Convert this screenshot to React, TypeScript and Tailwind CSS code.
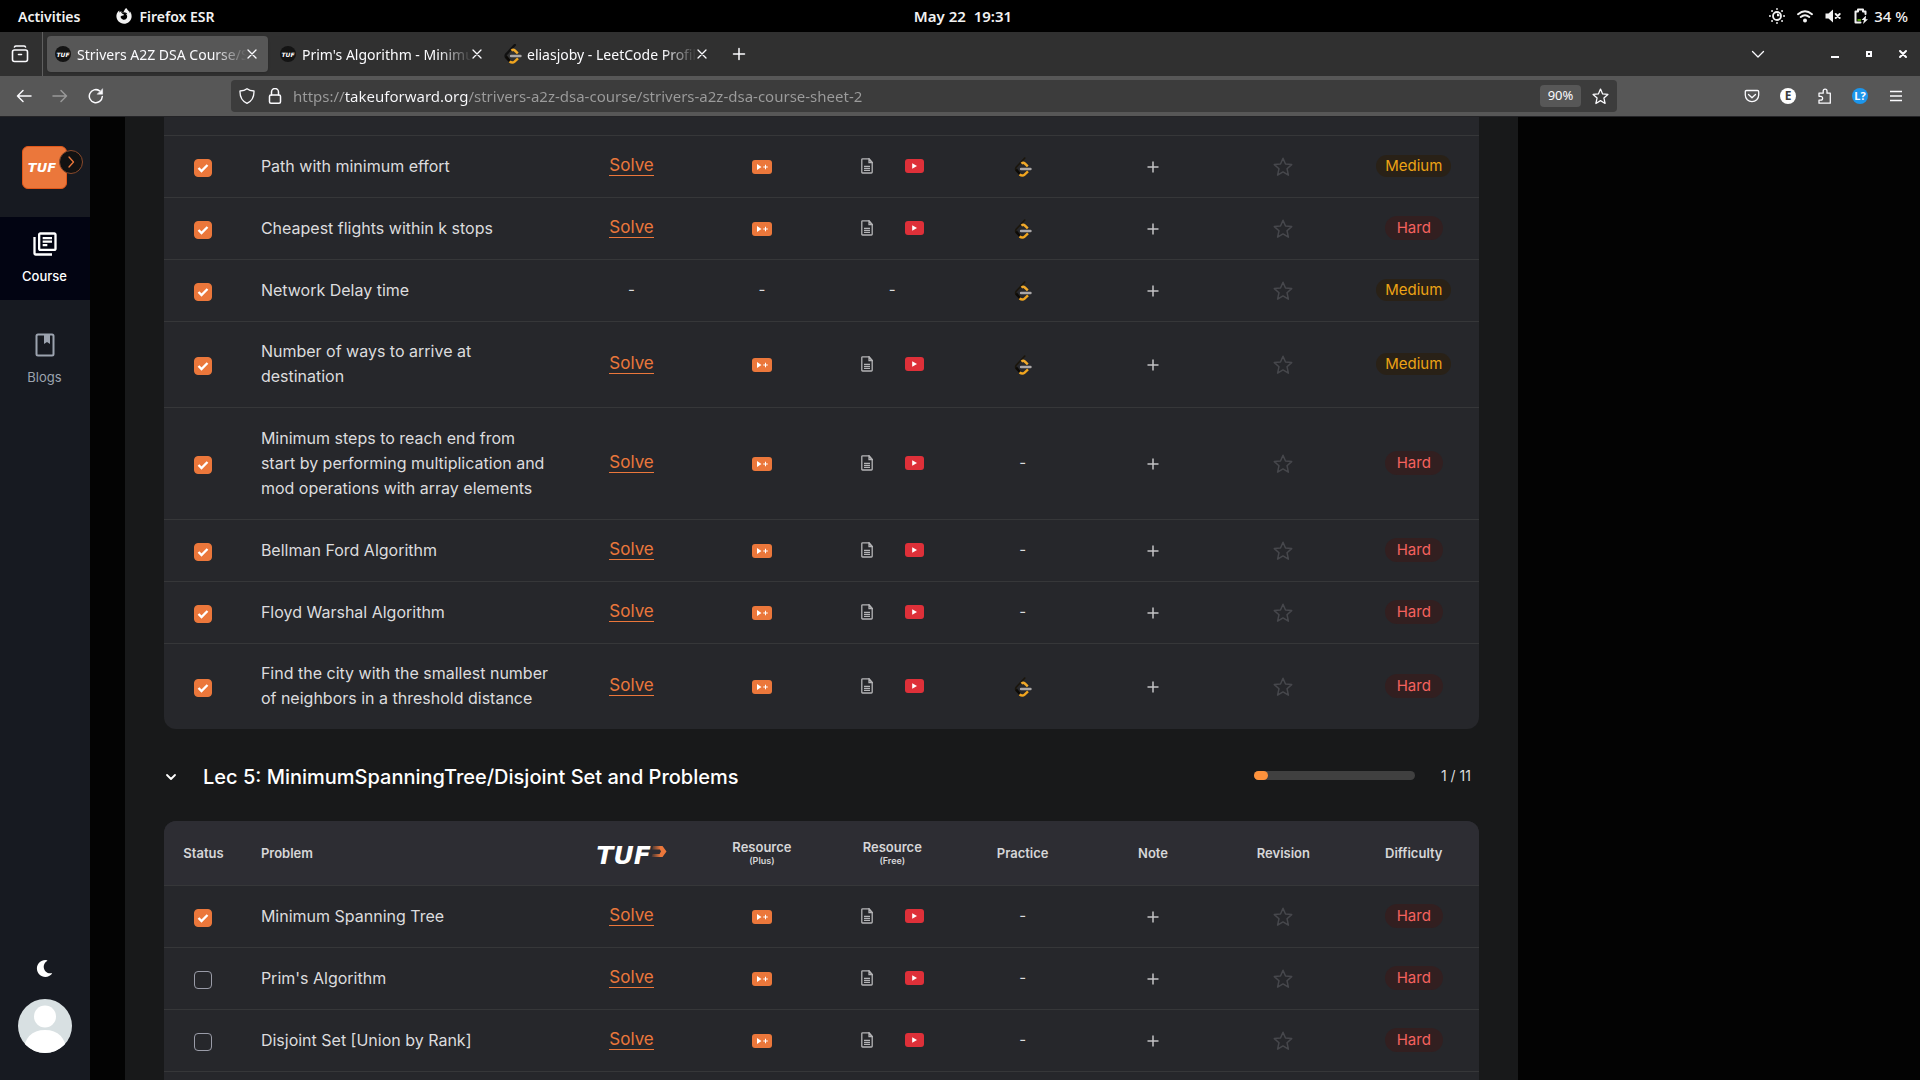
import { useState } from "react";
import type { ReactNode } from "react";
import { FaMoon, FaFirefoxBrowser } from "react-icons/fa";
import { MdOutlineLibraryBooks } from "react-icons/md";

type Problem = {
  name: string;
  lines: 1 | 2 | 3;
  done: boolean;
  resources: boolean;
  practice: boolean;
  level: "Medium" | "Hard";
};

const p = (
  name: string,
  lines: 1 | 2 | 3,
  level: "Medium" | "Hard",
  practice: boolean,
  done = true,
  resources = true,
): Problem => ({ name, lines, level, practice, done, resources });

const shortestPath: Problem[] = [
  p("Path with minimum effort", 1, "Medium", true),
  p("Cheapest flights within k stops", 1, "Hard", true),
  p("Network Delay time", 1, "Medium", true, true, false),
  p("Number of ways to arrive at destination", 2, "Medium", true),
  p("Minimum steps to reach end from start by performing multiplication and mod operations with array elements", 3, "Hard", false),
  p("Bellman Ford Algorithm", 1, "Hard", false),
  p("Floyd Warshal Algorithm", 1, "Hard", false),
  p("Find the city with the smallest number of neighbors in a threshold distance", 2, "Hard", true),
];

const spanningTree: Problem[] = [
  p("Minimum Spanning Tree", 1, "Hard", false),
  p("Prim's Algorithm", 1, "Hard", false, false),
  p("Disjoint Set [Union by Rank]", 1, "Hard", false, false),
  p("Disjoint Set [Union by Size]", 1, "Hard", false, false),
];

const rowHeight = { 1: "h-[62px]", 2: "h-[86px]", 3: "h-[112px]" };

/* ---------- icons ---------- */

function Svg({ size = 16, box = "0 0 16 16", className = "", children }: { size?: number; box?: string; className?: string; children: ReactNode }) {
  return (
    <svg width={size} height={size} viewBox={box} fill="none" stroke="currentColor" strokeWidth="1.3" strokeLinecap="round" strokeLinejoin="round" className={`shrink-0 ${className}`} aria-hidden="true">
      {children}
    </svg>
  );
}

const CloseIcon = () => (
  <Svg size={10} box="0 0 10 10"><path d="M1 1l8 8M9 1l-8 8" /></Svg>
);

function LeetCodeIcon({ dark = false }: { dark?: boolean }) {
  return (
    <svg width="18" height="20" viewBox="0 0 18 20" fill="none" strokeLinejoin="round" className="shrink-0" aria-hidden="true">
      <path d="M10.800 1L2.200 10.200Q1 12 2.200 13.600L5.500 17" stroke={dark ? "#111" : "#1b160c"} strokeWidth={dark ? 2.4 : 1.6} strokeLinecap="round" />
      <path d="M2.200 12.500L5.500 16.500" stroke="#0c0a06" strokeWidth="2.200" />
      <path d="M7.500 6.600Q9.200 5 10.800 6.500L13.800 9.300" stroke="#f0a92a" strokeWidth="2.400" />
      <path d="M5.500 17.500Q8.500 19.600 10.600 17.600L14 14.400" stroke="#f0a51f" strokeWidth="2.400" />
      <path d="M7 12H16.500" stroke="#aaa7a8" strokeWidth="2.400" strokeLinecap="round" />
    </svg>
  );
}

const PlusVideoIcon = () => (
  <svg width="20" height="14" viewBox="0 0 20 14" aria-hidden="true">
    <rect width="20" height="14" rx="3" fill="#eb773b" />
    <path d="M5 4l4.500 3L5 10zM13 4.800h1V6.500h1.800v1H14v1.800h-1V7.500h-1.800v-1H13z" fill="#fff" />
  </svg>
);

const YouTubeIcon = () => (
  <svg width="19" height="14" viewBox="0 0 19 14" aria-hidden="true">
    <rect width="19" height="14" rx="3" fill="#de3039" />
    <path d="M7.200 4.200l4.800 2.800-4.800 2.800z" fill="#fff" />
  </svg>
);

const ArticleIcon = () => (
  <svg width="12" height="16" viewBox="0 0 12 16" fill="none" stroke="#b4b4b6" strokeWidth="1.300" aria-hidden="true">
    <path d="M.800 1.600q0-.8.8-.8H8l3.200 3.600v9.800q0 .8-.8.8H1.600q-.8 0-.8-.8z" />
    <path d="M8 .8v3.700h3.200zM3 8.400h6M3 10.400h6M3 12.400h6" />
  </svg>
);

const StarIcon = ({ size }: { size: number }) => (
  <svg width={size} height={size} viewBox="0 0 20 20" fill="none" stroke="currentColor" strokeWidth="1.500" strokeLinejoin="round" aria-hidden="true">
    <path d="M10 1.300l2.500 5.700 6.200.6-4.700 4.100 1.400 6.500-5.400-3.300-5.400 3.300L6 11.700 1.300 7.600l6.200-.6z" />
  </svg>
);

function TufFavicon() {
  return (
    <span className="flex size-4 shrink-0 items-center justify-center rounded-full bg-[#141414] font-['DejaVu_Sans',sans-serif] text-[6px] font-bold italic text-white" aria-hidden="true">
      TUF
    </span>
  );
}

/* ---------- desktop and browser bars ---------- */

function TopBar() {
  return (
    <header className="grid h-8 shrink-0 grid-cols-3 items-center bg-black pl-[18px] pr-3 text-[14px] font-semibold text-[#f2f2f2]">
      <div className="flex items-center">
        <button>Activities</button>
        <button className="ml-[36px] flex items-center gap-[7px]">
          <FaFirefoxBrowser size={16} />
          Firefox ESR
        </button>
      </div>
      <button className="justify-self-center whitespace-pre text-[15px]">May 22  19:31</button>
      <div className="flex items-center justify-end gap-3">
        <Svg>
          <circle cx="8" cy="8" r="4" strokeWidth="1.800" />
          <path d="M8 5.500v2.700h2.500A2.500 2.500 0 0 0 8 5.500z" fill="currentColor" stroke="none" />
          <path d="M8 .9v.1M8 15v.1M.9 8H1M15 8h.1M3 3h.1M13 3h.1M3 13h.1M13 13h.1" strokeWidth="1.800" />
        </Svg>
        <Svg>
          <path d="M1 6.200q7-6 14 0M3.700 9q4.300-3.700 8.600 0" strokeWidth="1.900" />
          <circle cx="8" cy="12.500" r="2" fill="currentColor" stroke="none" />
        </Svg>
        <Svg>
          <path d="M.500 5.500H3.500L8 1.500v13L3.500 10.500h-3z" fill="currentColor" stroke="none" />
          <path d="M10.700 6l4 4M14.700 6l-4 4" strokeWidth="1.900" />
        </Svg>
        <div className="flex items-center gap-[5px]">
          <Svg>
            <path d="M12.500 6V3.500H10V1.500H5v2H2.500v11h5" strokeWidth="2" />
            <path d="M4.500 11h3.500v2H4.500z" fill="#4e9a06" stroke="none" />
            <path d="M13 7.500L8.500 12H11l-1 4 5-4.800h-2.300z" fill="currentColor" stroke="none" />
          </Svg>
          <span className="text-[15px] font-medium">34 %</span>
        </div>
      </div>
    </header>
  );
}

function Tab({ title, icon, active = false }: { title: string; icon: ReactNode; active?: boolean }) {
  return (
    <div className={`flex h-9 w-[221px] shrink-0 items-center rounded pl-2 pr-[11px] ${active ? "bg-[#575757] shadow" : ""}`}>
      <button role="tab" aria-selected={active} className="flex min-w-0 flex-1 items-center gap-[6px] text-left">
        <span className="flex w-4 shrink-0 justify-center">{icon}</span>
        <span className="flex-1 overflow-hidden whitespace-nowrap mask-r-from-80%">{title}</span>
      </button>
      <button aria-label="Close tab"><CloseIcon /></button>
    </div>
  );
}

function TabBar() {
  return (
    <div className="flex h-11 shrink-0 items-center bg-[#303030] pr-3 text-[14px] text-[#fbfbfe]">
      <button className="flex h-full w-[43px] items-center justify-center border-r border-[#5f5f5f] pr-[3px]" aria-label="Recent browsing">
        <Svg size={18} box="0 0 18 18">
          <rect x="1.500" y="5" width="15" height="11.500" rx="2" strokeWidth="1.600" />
          <path d="M3.500 2q.5-1 1.500-1h8q1 0 1.500 1M7.500 9.500h3" strokeWidth="1.600" />
        </Svg>
      </button>
      <div role="tablist" className="ml-1 flex gap-1">
        <Tab active title="Strivers A2Z DSA Course/Sheet" icon={<TufFavicon />} />
        <Tab title="Prim's Algorithm - Minimum" icon={<TufFavicon />} />
        <Tab title="eliasjoby - LeetCode Profile" icon={<LeetCodeIcon dark />} />
      </div>
      <button className="ml-[14px]" aria-label="New tab">
        <Svg size={14} box="0 0 14 14"><path d="M7 1.500v11M1.500 7h11" strokeWidth="1.500" /></Svg>
      </button>
      <div className="ml-auto flex items-center">
        <button className="mr-[65px]" aria-label="List all tabs">
          <Svg size={14} box="0 0 14 14"><path d="M1.500 4.500L7 10l5.500-5.500" /></Svg>
        </button>
        <div className="flex gap-6">
          <button aria-label="Minimize"><Svg size={10} box="0 0 10 10"><path d="M1 8h8" strokeWidth="2" strokeLinecap="butt" /></Svg></button>
          <button aria-label="Maximize"><Svg size={10} box="0 0 10 10"><rect x="3" y="3" width="4" height="4" strokeWidth="2" strokeLinejoin="miter" /></Svg></button>
          <button aria-label="Close"><Svg size={10} box="0 0 10 10"><path d="M2 2l6 6M8 2l-6 6" strokeWidth="2" /></Svg></button>
        </div>
      </div>
    </div>
  );
}

function ToolBar() {
  return (
    <nav className="flex h-[41px] shrink-0 items-center border-b border-[#242427] bg-[#575757] pl-4 pr-4 text-[#fbfbfe]">
      <div className="flex w-[215px] items-center gap-5">
        <button aria-label="Back"><Svg><path d="M15 8H1.500M7 2.500L1.500 8 7 13.500" strokeWidth="1.500" /></Svg></button>
        <button aria-label="Forward" className="text-[#999]"><Svg><path d="M1 8h13.500M9 2.500l5.500 5.500L9 13.500" strokeWidth="1.500" /></Svg></button>
        <button aria-label="Reload">
          <Svg>
            <path d="M14.300 8.500A6.500 6.500 0 1 1 11.500 2.800" strokeWidth="1.500" />
            <path d="M14.600 1v5.200H9.400z" fill="currentColor" strokeWidth=".5" />
          </Svg>
        </button>
      </div>
      <div className="flex h-8 min-w-0 flex-1 items-center rounded bg-[#3c3c3c] pl-2 pr-2">
        <Svg><path d="M8 .8Q10.500 3 15 3q.3 9-7 12.300Q.7 12 1 3 5.500 3 8 .8z" /></Svg>
        <Svg className="ml-3"><rect x="2.500" y="7" width="11" height="8.200" rx="1.500" strokeWidth="1.500" /><path d="M4.500 7V4a3.500 3.500 0 0 1 7 0v3" strokeWidth="1.500" /></Svg>
        <input
          aria-label="Address"
          readOnly
          value="https://takeuforward.org/strivers-a2z-dsa-course/strivers-a2z-dsa-course-sheet-2"
          className="ml-[10px] min-w-0 flex-1 bg-[linear-gradient(to_right,#9c9c9c_51px,#fbfbfe_51px,#fbfbfe_175px,#9c9c9c_175px)] bg-clip-text text-[15px] text-transparent outline-none"
        />
        <button className="mr-[11px] flex h-[22px] w-[41px] items-center justify-center rounded-sm bg-[#575757] text-[13px]">90%</button>
        <button aria-label="Bookmark"><StarIcon size={17} /></button>
      </div>
      <div className="ml-[127px] flex items-center gap-5">
        <button aria-label="Pocket"><Svg><path d="M2.500 2.500h11q1.200 0 1.200 1.200V7a6.700 6.700 0 0 1-13.400 0V3.700q0-1.200 1.200-1.200zM4.500 6.500L8 9.800l3.500-3.300" /></Svg></button>
        <button aria-label="Account" className="flex size-4 items-center justify-center rounded-full bg-white text-[12px] font-bold text-[#3c3c3c]">E</button>
        <button aria-label="Extensions"><Svg><path d="M3 15.200h11.300V5.200H11V3a1.900 1.900 0 0 0-3.800 0v2.200H3v3.100h1.700a1.900 1.900 0 0 1 0 3.800H3z" /></Svg></button>
        <button aria-label="Language extension" className="flex size-4 items-center justify-center rounded-full bg-[#1c96ec] text-[11px] font-bold">L?</button>
        <button aria-label="Menu"><Svg><path d="M2 3.500h12M2 8h12M2 12.500h12" strokeLinecap="butt" /></Svg></button>
      </div>
    </nav>
  );
}

/* ---------- page ---------- */

function SideBar() {
  return (
    <aside className="flex w-[90px] shrink-0 flex-col items-center bg-[#171a21] pb-[27px] pt-[29px] text-[13px]">
      <div className="relative mr-[2px] flex h-[43px] w-[45px] items-center justify-center rounded-md border border-[#e0581b] bg-[#eb773b]">
        <span className="-ml-1 font-['DejaVu_Sans',sans-serif] text-[13px] font-bold italic text-white">TUF</span>
        <button aria-label="Expand menu" className="absolute -right-[17px] top-[3px] flex size-6 items-center justify-center rounded-full border border-[#8a4a2c] bg-[#121212] text-[#eb773b]">
          <Svg size={12} box="0 0 12 12"><path d="M4 1l4.500 5L4 11" /></Svg>
        </button>
      </div>
      <nav className="mt-7 flex w-full flex-col gap-[18px]">
        <a href="#course" className="flex h-[83px] flex-col items-center justify-center gap-[9px] bg-[#020412] pr-px font-medium text-white">
          <MdOutlineLibraryBooks size={28} />
          Course
        </a>
        <a href="#blogs" className="flex h-[83px] flex-col items-center justify-center gap-[9px] pr-px text-[#9ca3af]">
          <Svg size={28} box="0 0 28 28">
            <rect x="5.500" y="3.500" width="17" height="21" rx="1.500" strokeWidth="2" />
            <path d="M13 4h6v9l-3-2-3 2z" fill="currentColor" stroke="none" />
          </Svg>
          Blogs
        </a>
      </nav>
      <button className="mr-[2px] mt-auto text-white" aria-label="Dark mode"><FaMoon size={17} /></button>
      <button className="mt-[22px] size-[54px] overflow-hidden rounded-full" aria-label="Profile">
        <svg viewBox="0 0 54 54" aria-hidden="true">
          <rect width="54" height="54" fill="#d8e0e2" />
          <circle cx="27" cy="17.500" r="11" fill="#fff" />
          <path d="M5 54Q7 31 27 31t22 23z" fill="#fff" />
        </svg>
      </button>
    </aside>
  );
}

function ProblemRow({ problem }: { problem: Problem }) {
  const [done, setDone] = useState(problem.done);
  const dash = <span>-</span>;
  return (
    <tr className={`border-b border-[#363739] text-center last:border-b-0 ${rowHeight[problem.lines]}`}>
      <td className="pt-1">
        <span className="flex justify-center">
          <span className="relative flex">
            <input
              type="checkbox"
              aria-label={`${problem.name} done`}
              checked={done}
              onChange={() => setDone(!done)}
              className="size-[18px] appearance-none rounded border border-[#9a9ca8] checked:border-[#eb773b] checked:bg-[#eb773b]"
            />
            {done && (
              <Svg size={18} box="0 0 18 18" className="pointer-events-none absolute inset-0 text-white"><path d="M4.500 9l3 3L13.500 6" strokeWidth="2.400" strokeLinecap="butt" strokeLinejoin="miter" /></Svg>
            )}
          </span>
        </span>
      </td>
      <td className="pl-[18px] pr-[15px] text-left text-[16px] leading-[25px]">{problem.name}</td>
      <td>{problem.resources ? <a href="#solve" className="border-b border-[#eb773b] text-[17px] leading-5 text-[#eb773b]">Solve</a> : dash}</td>
      <td>{problem.resources ? <a href="#plus" aria-label="Plus video" className="inline-flex align-middle"><PlusVideoIcon /></a> : dash}</td>
      <td>
        {problem.resources ? (
          <span className="flex items-center justify-center gap-8">
            <a href="#article" aria-label="Article"><ArticleIcon /></a>
            <a href="#video" aria-label="Video"><YouTubeIcon /></a>
          </span>
        ) : dash}
      </td>
      <td>{problem.practice ? <a href="#practice" aria-label="LeetCode" className="inline-flex align-middle"><LeetCodeIcon /></a> : dash}</td>
      <td>
        <button aria-label="Add note" className="align-middle text-[#c4c4c6]">
          <Svg size={12} box="0 0 12 12"><path d="M6 .500v11M.500 6h11" strokeWidth="1.500" strokeLinecap="butt" /></Svg>
        </button>
      </td>
      <td><button aria-label="Mark for revision" className="align-middle text-[#46474c]"><StarIcon size={20} /></button></td>
      <td>
        <span className={`inline-block rounded-full leading-[22px] ${problem.level === "Medium" ? "bg-[#292117] px-[9px] text-[#eda315]" : "bg-[#321f20] px-3 py-px text-[#f4625f]"}`}>
          {problem.level}
        </span>
      </td>
    </tr>
  );
}

function Columns() {
  return (
    <colgroup>
      <col className="w-[6%]" />
      <col className="w-[24.6%]" />
      <col span={7} className="w-[9.914%]" />
    </colgroup>
  );
}

function TufLogo() {
  return (
    <span className="inline-flex items-start pt-1 align-middle font-['DejaVu_Sans',sans-serif] text-[25px] font-bold italic leading-5 text-white">
      TUF
      <svg width="16" height="11" viewBox="0 0 16 11" aria-hidden="true">
        <defs>
          <linearGradient id="tuf-arrow" x1="0" x2="1">
            <stop offset="0" stopColor="#eb773b" stopOpacity=".1" />
            <stop offset=".6" stopColor="#eb773b" />
          </linearGradient>
        </defs>
        <path d="M2 0h9.500l4 5.500-4 5.500H.500L1.500 8h7L10 5.500 9 3.500H1z" fill="url(#tuf-arrow)" />
      </svg>
    </span>
  );
}

const Resource = ({ kind }: { kind: string }) => (
  <span className="flex flex-col leading-[14px]">
    Resource
    <span className="text-[9px]">({kind})</span>
  </span>
);

function ProblemHead() {
  return (
    <thead>
      <tr className="h-16 border-b border-[#363739] bg-[#2d2d33] text-[13px] text-[#d6d6d8] *:pt-0.5 *:font-semibold">
        <th>Status</th>
        <th className="pl-[18px] text-left">Problem</th>
        <th><TufLogo /></th>
        <th><Resource kind="Plus" /></th>
        <th><Resource kind="Free" /></th>
        <th>Practice</th>
        <th>Note</th>
        <th>Revision</th>
        <th>Difficulty</th>
      </tr>
    </thead>
  );
}

export default function App() {
  return (
    <div className="flex h-screen flex-col overflow-hidden bg-[#030303] font-['Noto_Sans',sans-serif]">
      <TopBar />
      <TabBar />
      <ToolBar />
      <div className="flex min-h-0 flex-1 font-[Inter,sans-serif]">
        <SideBar />
        <main className="grid flex-1 grid-cols-[35px_1393fr_402fr] overflow-hidden text-[15px] text-[#dcdcde]">
          <section className="col-start-2 bg-[#18191a] px-[39px]">
            <div className="overflow-hidden rounded-b-xl bg-[#26272b]">
              <table className="w-full table-fixed border-collapse">
                <Columns />
                <tbody>
                  <tr className="h-[18px] border-b border-[#363739]"><td colSpan={9} className="p-0" /></tr>
                  {shortestPath.map((item) => <ProblemRow key={item.name} problem={item} />)}
                </tbody>
              </table>
            </div>
            <div className="flex h-[92px] items-center pl-[1px] pr-2">
              <button className="flex items-center gap-[26px] pt-1 text-[20px] font-medium text-white">
                <Svg size={12} box="0 0 12 12"><path d="M2 4l4 4 4-4" strokeWidth="1.800" /></Svg>
                Lec 5: MinimumSpanningTree/Disjoint Set and Problems
              </button>
              <div role="progressbar" aria-label="Lecture progress" aria-valuenow={1} aria-valuemax={11} className="ml-auto mr-[26px] h-[9px] w-[161px] rounded-full bg-[#404040]">
                <div className="h-full w-[9%] rounded-full bg-[#fd923c]" />
              </div>
              <span className="text-[14px]">1 / 11</span>
            </div>
            <div className="overflow-hidden rounded-t-xl bg-[#26272b]">
              <table className="w-full table-fixed border-collapse">
                <Columns />
                <ProblemHead />
                <tbody>
                  {spanningTree.map((item) => <ProblemRow key={item.name} problem={item} />)}
                </tbody>
              </table>
            </div>
          </section>
        </main>
      </div>
    </div>
  );
}
